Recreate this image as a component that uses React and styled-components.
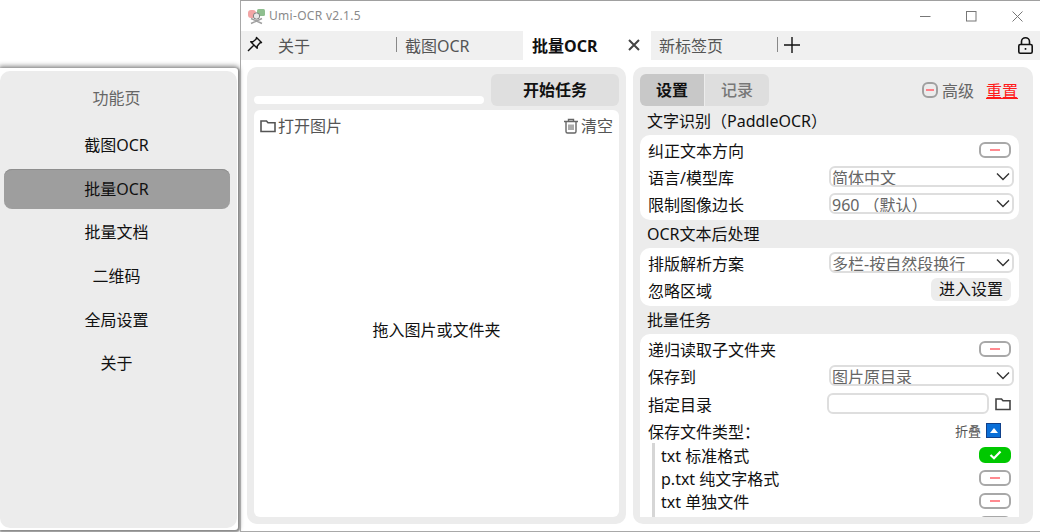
import React from 'react';
import styled, { createGlobalStyle } from 'styled-components';

const GlobalStyle = createGlobalStyle`
  html, body { margin: 0; padding: 0; background: #fff; }
  body {
    width: 1040px;
    height: 532px;
    overflow: hidden;
    font-family: "Noto Sans", "Noto Sans CJK SC", sans-serif;
    font-size: 16px;
    color: #111;
  }
  * { box-sizing: border-box; }
`;

const Page = styled.div`
  display: flex;
  width: 1040px;
  height: 532px;
  overflow: hidden;
`;

const DrawerColumn = styled.div`
  width: 240px;
  flex: none;
  padding: 68px 2px 2px 0;
  display: flex;
`;

const DrawerShell = styled.div`
  flex: 1;
  background: #fff;
  border-radius: 0 3px 3px 0;
  padding: 3px 1px 2px 0;
  box-shadow: 0 -1px 5px 1px #8c8c8c, 1px 1px 2px 1px #8c8c8c;
  display: flex;
`;

const Drawer = styled.nav`
  flex: 1;
  background: #ececec;
  border-radius: 10px;
  padding: 11px 4px 0 0;
  display: flex;
  flex-direction: column;
  align-items: center;
`;

const DrawerTitle = styled.div`
  height: 32px;
  line-height: 32px;
  color: #666;
  margin-bottom: 11px;
`;

const DrawerItem = styled.div`
  width: 226px;
  height: 40px;
  line-height: 40px;
  margin-bottom: 3.7px;
  text-align: center;
  border-radius: 8px;
  background: ${p => (p.$active ? '#9e9e9e' : 'transparent')};
  box-shadow: ${p => (p.$active ? 'inset 0 1px 0 #8e8e8e' : 'none')};
`;

const Window = styled.div`
  flex: 1;
  min-width: 0;
  display: flex;
  flex-direction: column;
  border-top: 1px solid #a0a0a0;
  border-left: 1px solid #a8a8a8;
  border-bottom: 1px solid #a8a8a8;
`;

const TitleBar = styled.div`
  height: 30px;
  display: flex;
  align-items: center;
  padding-left: 7px;
  flex: none;
`;

const AppTitle = styled.span`
  font-size: 12px;
  color: #8a8a8a;
  margin-left: 4px;
  letter-spacing: 0.3px;
  padding-bottom: 2px;
`;

const WindowButtons = styled.div`
  margin-left: auto;
  display: flex;
  height: 30px;
`;

const WindowButton = styled.div`
  width: 46px;
  display: flex;
  align-items: center;
  justify-content: center;
`;

const TabBar = styled.div`
  height: 29px;
  flex: none;
  background: #f0f0f0;
  display: flex;
  align-items: stretch;
`;

const PinSlot = styled.div`
  width: 37px;
  display: flex;
  align-items: center;
  padding: 0 0 3px 6px;
`;

const Tab = styled.div`
  width: ${p => p.$width}px;
  display: flex;
  align-items: center;
  color: #555;
  padding: 0 0 2px ${p => p.$pad || 0}px;
`;

const ActiveTab = styled.div`
  width: 128px;
  background: #fff;
  display: flex;
  align-items: center;
  justify-content: space-between;
  padding: 0 11px 2px 9px;
  font-weight: 700;
  color: #111;
`;

const TabDivider = styled.div`
  width: 1px;
  height: 15px;
  background: #888;
  align-self: center;
  margin-bottom: 2px;
  margin-right: ${p => p.$gap || 0}px;
`;

const AddTab = styled.div`
  display: flex;
  align-items: center;
  margin-left: 6px;
  padding-bottom: 1px;
`;

const LockSlot = styled.div`
  margin-left: auto;
  padding: 0 7px 1px 0;
  display: flex;
  align-items: center;
`;

const Content = styled.div`
  flex: 1;
  min-height: 0;
  display: flex;
  gap: 7px;
  padding: 7px 6px 7px 6px;
`;

const Panel = styled.section`
  background: #ececec;
  border-radius: 10px;
  padding: 7px ${p => p.$right || 7}px 7px 7px;
  display: flex;
  flex-direction: column;
  width: ${p => p.$width}px;
  flex: none;
  min-height: 0;
`;

const TaskBar = styled.div`
  display: flex;
  align-items: flex-end;
  gap: 7px;
  height: 32px;
  margin-bottom: 4px;
`;

const Progress = styled.div`
  flex: 1;
  height: 8px;
  background: #fff;
  border-radius: 4px;
  margin-bottom: 2px;
`;

const StartButton = styled.div`
  width: 128px;
  height: 32px;
  line-height: 32px;
  background: #dfdfdf;
  border-radius: 6px;
  text-align: center;
  font-weight: 700;
`;

const DropCard = styled.div`
  flex: 1;
  background: #fff;
  border-radius: 6px;
  display: flex;
  flex-direction: column;
  padding: 4px 6px 0 6px;
`;

const DropHeader = styled.div`
  display: flex;
  justify-content: space-between;
  color: #555;
  height: 24px;
  line-height: 24px;
`;

const IconLabel = styled.span`
  display: flex;
  align-items: center;
  gap: 2px;
`;

const DropHint = styled.div`
  flex: 1;
  display: flex;
  align-items: center;
  justify-content: center;
  padding-top: 2px;
`;

const SettingsHead = styled.div`
  display: flex;
  align-items: center;
  height: 32px;
  flex: none;
`;

const SegTab = styled.div`
  width: 64px;
  height: 32px;
  line-height: 32px;
  text-align: center;
  background: ${p => (p.$active ? '#c8c8c8' : '#dedede')};
  color: ${p => (p.$active ? '#111' : '#777')};
  font-weight: ${p => (p.$active ? 700 : 500)};
  border-radius: ${p => (p.$active ? '6px 0 0 6px' : '0 6px 6px 0')};
  margin-right: ${p => (p.$active ? 1 : 0)}px;
`;

const HeadTools = styled.div`
  margin-left: auto;
  display: flex;
  align-items: center;
  padding-right: 1px;
`;

const Advanced = styled.span`
  display: flex;
  align-items: center;
  gap: 4px;
  color: #666;
  margin-right: 12px;
`;

const MinusBadge = styled.span`
  width: 16px;
  height: 16px;
  border: 2px solid #a0a0a0;
  border-radius: 6px;
  display: flex;
  align-items: center;
  justify-content: center;
  &::after {
    content: '';
    width: 8px;
    height: 2px;
    background: #ff8088;
  }
`;

const Reset = styled.span`
  color: #ff1a1a;
  text-decoration: underline;
`;

const Scroller = styled.div`
  flex: 1;
  min-height: 0;
  overflow: hidden;
`;

const GroupTitle = styled.div`
  height: ${p => p.$h || 28}px;
  line-height: 28px;
  padding: ${p => (p.$h || 28) - 28}px 0 0 7px;
`;

const Card = styled.div`
  background: #fff;
  border-radius: 10px;
  padding: 1px 8px 3px 8px;
`;

const Row = styled.div`
  height: ${p => p.$h || 27}px;
  display: flex;
  align-items: center;
  justify-content: space-between;
  white-space: nowrap;
`;

const SwitchBox = styled.span`
  width: 32px;
  height: 16px;
  border-radius: 6px;
  border: 2px solid ${p => (p.$on ? '#00c800' : '#a8a8a8')};
  background: ${p => (p.$on ? '#00c800' : '#fff')};
  display: flex;
  align-items: center;
  justify-content: center;
  &::after {
    content: '';
    display: ${p => (p.$on ? 'none' : 'block')};
    width: 10px;
    height: 2px;
    background: #ff8a90;
  }
`;

const ComboBox = styled.div`
  width: 185px;
  height: 21px;
  border: 2px solid #dedede;
  border-radius: 6px;
  display: flex;
  align-items: center;
  justify-content: space-between;
  padding: 0 2px 0 1px;
  margin-right: -3px;
  color: #666;
  overflow: hidden;
`;

const TextInput = styled.div`
  width: 162px;
  height: 21px;
  border: 2px solid #dedede;
  border-radius: 6px;
`;

const PathField = styled.div`
  display: flex;
  align-items: center;
  gap: 6px;
`;

const SmallButton = styled.div`
  width: 80px;
  height: 23px;
  line-height: 23px;
  text-align: center;
  background: #ececec;
  border-radius: 6px;
`;

const FoldGroup = styled.div`
  display: flex;
  align-items: center;
  gap: 5px;
  font-size: 13px;
  color: #555;
  margin-right: 10px;
`;

const FoldButton = styled.span`
  width: 15px;
  height: 15px;
  background: #0a6fd8;
  border: 1px solid #10408a;
  display: flex;
  align-items: center;
  justify-content: center;
  &::after {
    content: '';
    width: 0;
    height: 0;
    border-left: 4px solid transparent;
    border-right: 4px solid transparent;
    border-bottom: 5px solid #fff;
  }
`;

const SubList = styled.div`
  border-left: 3px solid #d6d6d6;
  margin-left: 4px;
  padding-left: 6px;
`;

const Chevron = () => (
  <svg width="14" height="9" viewBox="0 0 14 9" fill="none" stroke="#333" strokeWidth="1.4">
    <path d="M1 1.5 L7 7.5 L13 1.5" />
  </svg>
);

const Check = () => (
  <svg width="13" height="10" viewBox="0 0 13 10" fill="none" stroke="#fff" strokeWidth="2.2">
    <path d="M1.5 5 L5 8.3 L11.5 1.5" />
  </svg>
);

const Lock = () => (
  <svg width="15" height="17" viewBox="0 0 15 17" fill="none" stroke="#111" strokeWidth="1.6">
    <rect x="0.8" y="7.5" width="13.4" height="8.7" rx="1.5" />
    <path d="M3.5 7.5 V4.5 a4 3.7 0 0 1 8 0 V7.5" />
    <rect x="6.7" y="11" width="1.6" height="1.8" fill="#111" stroke="none" />
  </svg>
);

const AppLogo = () => (
  <svg width="17" height="17" viewBox="0 0 17 17">
    <rect x="0" y="2" width="8" height="8" rx="3" fill="#f2a5a5" />
    <rect x="9" y="1" width="8" height="7" rx="1.5" fill="#8fbf8f" />
    <circle cx="8.5" cy="8" r="3.2" fill="#e8e8e8" stroke="#808080" strokeWidth="1" />
    <path d="M3 15.5 L14 10.5 M3 10.5 L14 15.5" stroke="#a0a0a0" strokeWidth="1.5" />
  </svg>
);

const PinIcon = () => (
  <svg width="16" height="16" viewBox="0 0 16 16" fill="none" stroke="#111" strokeWidth="1.4" strokeLinejoin="round">
    <path d="M9.5 1.5 L14.5 6.5 L12.8 7 L10.3 10 L10.2 12.3 L3.7 5.8 L6 5.7 L9 3.2 Z" />
    <path d="M6.8 9.2 L1 15" />
  </svg>
);

const PlusIcon = () => (
  <svg width="16" height="16" viewBox="0 0 16 16" stroke="#111" strokeWidth="1.4" fill="none">
    <path d="M8 0 V16 M0 8 H16" />
  </svg>
);

const FolderIcon = ({ color = '#555', size = 16 }) => (
  <svg width={size} height={size} viewBox="0 0 16 16" fill="none" stroke={color} strokeWidth="1.6">
    <path d="M1 3 H6.5 L8 4.8 H15 V13.5 H1 Z" />
  </svg>
);

const TrashIcon = () => (
  <svg width="16" height="16" viewBox="0 0 16 16" fill="none" stroke="#666" strokeWidth="1.4">
    <path d="M1 3.5 H15 M5.5 3.5 V1.5 H10.5 V3.5" />
    <path d="M3 3.5 V13.5 Q3 15 4.5 15 H11.5 Q13 15 13 13.5 V3.5" />
    <path d="M6 6.5 V12 M8 6.5 V12 M10 6.5 V12" strokeWidth="1.1" />
  </svg>
);

const WinMin = () => (
  <svg width="11" height="11" viewBox="0 0 11 11" stroke="#777" fill="none"><path d="M0 5.5 H10.5" /></svg>
);
const WinMax = () => (
  <svg width="11" height="11" viewBox="0 0 11 11" stroke="#777" fill="none"><rect x="0.5" y="0.5" width="9.5" height="9.5" /></svg>
);
const WinClose = () => (
  <svg width="11" height="11" viewBox="0 0 11 11" stroke="#777" fill="none"><path d="M0.5 0.5 L10.5 10.5 M10.5 0.5 L0.5 10.5" /></svg>
);
const TabClose = () => (
  <svg width="12" height="12" viewBox="0 0 12 12" stroke="#444" strokeWidth="2" fill="none"><path d="M1 1 L11 11 M11 1 L1 11" /></svg>
);

const MENU = ['截图OCR', '批量OCR', '批量文档', '二维码', '全局设置', '关于'];

export default function App() {
  return (
    <Page>
      <GlobalStyle />
      <DrawerColumn>
        <DrawerShell>
          <Drawer>
            <DrawerTitle>功能页</DrawerTitle>
            {MENU.map(name => (
              <DrawerItem key={name} $active={name === '批量OCR'}>{name}</DrawerItem>
            ))}
          </Drawer>
        </DrawerShell>
      </DrawerColumn>

      <Window>
        <TitleBar>
          <AppLogo />
          <AppTitle>Umi-OCR v2.1.5</AppTitle>
          <WindowButtons>
            <WindowButton><WinMin /></WindowButton>
            <WindowButton><WinMax /></WindowButton>
            <WindowButton><WinClose /></WindowButton>
          </WindowButtons>
        </TitleBar>

        <TabBar>
          <PinSlot><PinIcon /></PinSlot>
          <Tab $width={118}>关于</Tab>
          <TabDivider $gap={8} />
          <Tab $width={118}>截图OCR</Tab>
          <ActiveTab>批量OCR<TabClose /></ActiveTab>
          <Tab $width={126} $pad={8}>新标签页</Tab>
          <TabDivider />
          <AddTab><PlusIcon /></AddTab>
          <LockSlot><Lock /></LockSlot>
        </TabBar>

        <Content>
          <Panel $width={379}>
            <TaskBar>
              <Progress />
              <StartButton>开始任务</StartButton>
            </TaskBar>
            <DropCard>
              <DropHeader>
                <IconLabel><FolderIcon />打开图片</IconLabel>
                <IconLabel><TrashIcon />清空</IconLabel>
              </DropHeader>
              <DropHint>拖入图片或文件夹</DropHint>
            </DropCard>
          </Panel>

          <Panel $width={400} $right={14}>
            <SettingsHead>
              <SegTab $active>设置</SegTab>
              <SegTab>记录</SegTab>
              <HeadTools>
                <Advanced><MinusBadge />高级</Advanced>
                <Reset>重置</Reset>
              </HeadTools>
            </SettingsHead>
            <Scroller>
              <GroupTitle $h={29}>文字识别（PaddleOCR）</GroupTitle>
              <Card>
                <Row>纠正文本方向<SwitchBox /></Row>
                <Row>语言/模型库<ComboBox>简体中文<Chevron /></ComboBox></Row>
                <Row>限制图像边长<ComboBox>960 （默认）<Chevron /></ComboBox></Row>
              </Card>
              <GroupTitle>OCR文本后处理</GroupTitle>
              <Card>
                <Row>排版解析方案<ComboBox>多栏-按自然段换行<Chevron /></ComboBox></Row>
                <Row>忽略区域<SmallButton>进入设置</SmallButton></Row>
              </Card>
              <GroupTitle>批量任务</GroupTitle>
              <Card>
                <Row>递归读取子文件夹<SwitchBox /></Row>
                <Row>保存到<ComboBox>图片原目录<Chevron /></ComboBox></Row>
                <Row $h={29}>指定目录<PathField><TextInput /><FolderIcon color="#444" /></PathField></Row>
                <Row $h={25}>保存文件类型：<FoldGroup>折叠<FoldButton /></FoldGroup></Row>
                <SubList>
                  <Row $h={23}>txt 标准格式<SwitchBox $on><Check /></SwitchBox></Row>
                  <Row $h={23}>p.txt 纯文字格式<SwitchBox /></Row>
                  <Row $h={23}>txt 单独文件<SwitchBox /></Row>
                  <Row $h={23}>csv 表格文件<SwitchBox /></Row>
                </SubList>
              </Card>
            </Scroller>
          </Panel>
        </Content>
      </Window>
    </Page>
  );
}
